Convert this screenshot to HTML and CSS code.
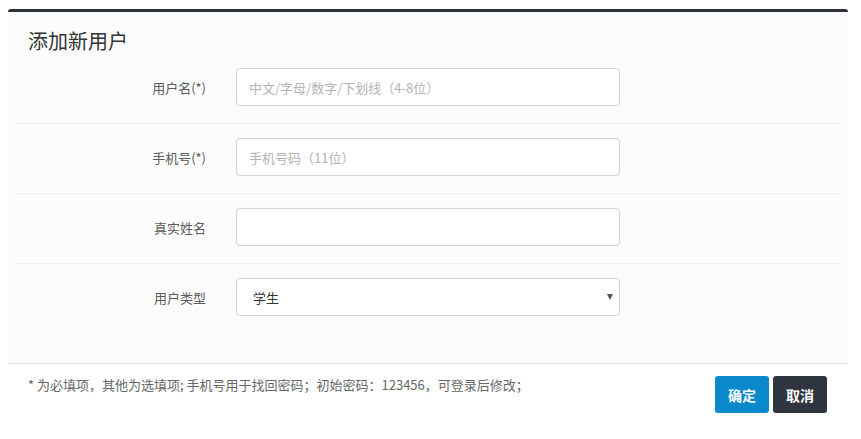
FILE: index.html
```html
<!DOCTYPE HTML>
<html>
    <head>
        <meta charset="utf-8">
        <title>添加新用户</title>
        <link rel="stylesheet" href="styles.css">
    </head>

    <body>
        <div class="modal">
            <div class="modal-header">
                <h4 class="modal-title">添加新用户</h4>
            </div>

            <form class="modal-body" id="addUser">
                <div class="form-row">
                    <label for="username">用户名(*)</label>
                    <input type="text" id="username" placeholder="中文/字母/数字/下划线（4-8位）">
                </div>
                <div class="form-row">
                    <label for="phone">手机号(*)</label>
                    <input type="text" id="phone" placeholder="手机号码（11位）">
                </div>
                <div class="form-row">
                    <label for="realname">真实姓名</label>
                    <input type="text" id="realname">
                </div>
                <div class="form-row last">
                    <label for="usertype">用户类型</label>
                    <div class="select-wrap">
                        <select id="usertype">
                            <option>学生</option>
                            <option>教师</option>
                            <option>管理员</option>
                        </select>
                    </div>
                </div>
            </form>

            <div class="modal-footer">
                <p class="tip">* 为必填项，其他为选填项; 手机号用于找回密码；初始密码：123456，可登录后修改；</p>
                <div class="buttons">
                    <button type="submit" form="addUser" class="btn btn-primary">确定</button>
                    <button type="button" class="btn btn-dark">取消</button>
                </div>
            </div>
        </div>
    </body>
</html>
```

FILE: styles.css
```css
body {
    margin: 0;
    background: #ffffff;
    font-family: "Noto Sans CJK SC", "Liberation Sans", sans-serif;
    color: #333;
}
.modal {
    margin: 9px 13px 0 8px;
    border-top: 3px solid #2e3239;
    border-radius: 3px 3px 0 0;
}
.modal-header {
    background: #fcfcfc;
    padding: 15px 20px 0;
}
.modal-title {
    margin: 0;
    font-size: 20px;
    font-weight: normal;
    line-height: 27px;
    color: #333;
}
.modal-body {
    display: block;
    margin: 0;
    background: #fcfcfc;
    padding: 0 5px 30px;
    border-bottom: 1px solid #e2e2e2;
}
.form-row {
    display: flex;
    align-items: center;
    padding: 14px 0 17px;
    border-bottom: 1px solid #eff0f5;
}
.form-row.last {
    border-bottom: none;
}
.form-row label {
    width: 193px;
    margin-right: 30px;
    text-align: right;
    font-size: 13px;
    color: #5a5a5a;
}
input[type="text"], select {
    box-sizing: border-box;
    width: 384px;
    height: 38px;
    padding: 0 12px;
    border: 1px solid #d0d3d9;
    border-radius: 4px;
    background: #fff;
    font-family: inherit;
    font-size: 13px;
    color: #333;
    outline: none;
}
input::placeholder {
    color: #b4b4b4;
}
.select-wrap {
    position: relative;
}
select {
    appearance: none;
    padding-left: 16px;
}
.select-wrap::after {
    content: "";
    position: absolute;
    right: 7px;
    top: 16px;
    border-left: 3.5px solid transparent;
    border-right: 3.5px solid transparent;
    border-top: 6px solid #555;
    pointer-events: none;
}
.modal-footer {
    display: flex;
    justify-content: space-between;
    align-items: flex-start;
    padding: 12px 21px 20px 20px;
    background: #fff;
}
.tip {
    margin: 0;
    font-size: 13px;
    line-height: 18px;
    color: #666;
}
.buttons {
    display: flex;
    gap: 4px;
}
.btn {
    width: 54px;
    height: 37px;
    border: none;
    border-radius: 3px;
    font-family: inherit;
    font-size: 14px;
    font-weight: bold;
    color: #fff;
    cursor: pointer;
}
.btn-primary {
    background: #0a89cc;
}
.btn-dark {
    background: #2f353e;
}
```
